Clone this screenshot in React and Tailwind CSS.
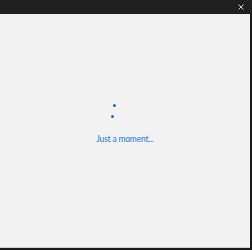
import React from "react";

const App = () => {
  return (
    <div className="w-[252px] h-[250px] bg-[#1c1c1c] flex flex-col overflow-hidden">
      <div className="h-[14px] bg-[#202020] flex items-center justify-end pr-[8px]">
        <svg width="6" height="6" viewBox="0 0 6 6">
          <path d="M0.5 0.5L5.5 5.5M5.5 0.5L0.5 5.5" stroke="#d0d0d0" strokeWidth="1" />
        </svg>
      </div>
      <div className="flex-1 mr-[2px] mb-[2px] bg-[#f2f2f2] border-b border-[#cfcfcf] flex flex-col items-center">
        <div className="relative w-full h-[120px]">
          <span className="absolute left-[113px] top-[90px] w-[3px] h-[3px] rounded-full bg-[#0a6fd6]" />
          <span className="absolute left-[111px] top-[101px] w-[3px] h-[3px] rounded-full bg-[#0a6fd6]" />
        </div>
        <div
          className="text-[8.5px] tracking-[-0.2px] text-[#2277d4] leading-none mt-[1px]"
          style={{ fontFamily: 'Lato, "Open Sans", sans-serif' }}
        >
          Just a moment...
        </div>
      </div>
    </div>
  );
};

export default App;
